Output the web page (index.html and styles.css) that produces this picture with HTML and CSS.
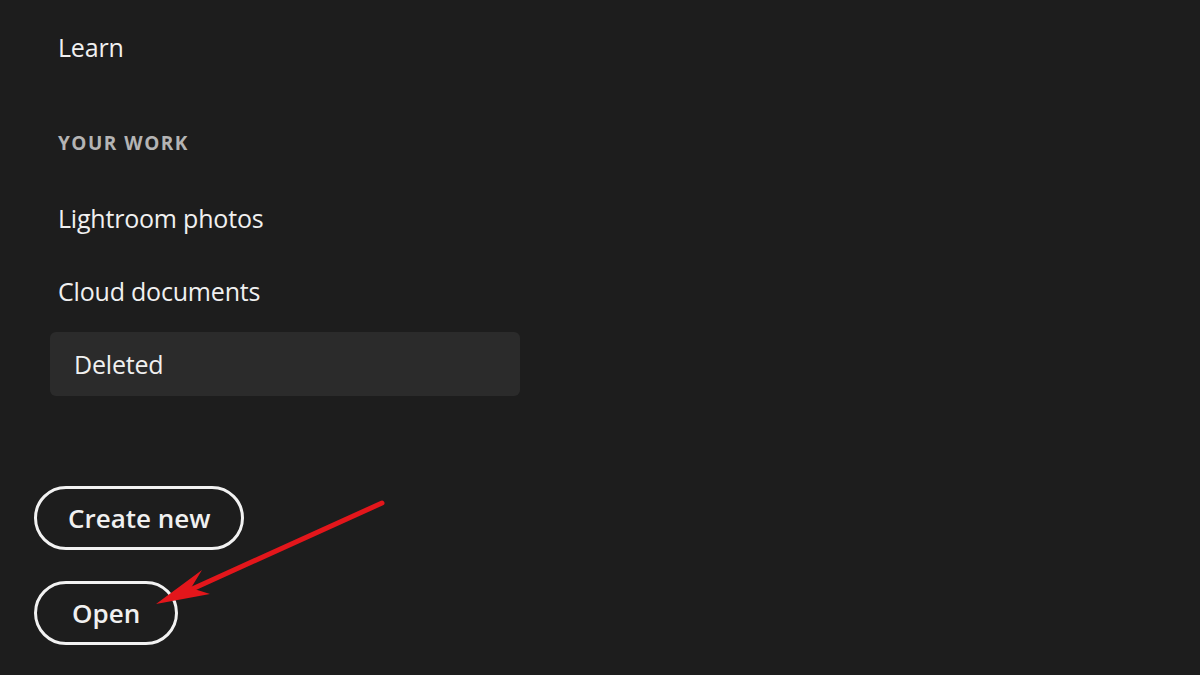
FILE: index.html
```html
<!DOCTYPE html>
<html lang="en">
<head>
    <meta charset="UTF-8">
    <meta name="viewport" content="width=device-width, initial-scale=1.0">
    <title>Your work</title>
    <link rel="stylesheet" href="styles.css">
</head>
<body>
    <aside class="sidebar">
        <nav class="nav">
            <a href="#" class="nav-item">Learn</a>
        </nav>

        <div class="section-title">YOUR WORK</div>

        <nav class="nav">
            <a href="#" class="nav-item">Lightroom photos</a>
            <a href="#" class="nav-item">Cloud documents</a>
            <a href="#" class="nav-item selected">Deleted</a>
        </nav>

        <div class="actions">
            <button class="pill-btn">Create new</button>
            <button class="pill-btn">Open</button>
        </div>
    </aside>

    <!-- annotation arrow pointing at Open -->
    <svg class="arrow" width="1200" height="675" viewBox="0 0 1200 675">
        <line x1="382" y1="503" x2="190" y2="590" stroke="#e3161b" stroke-width="5" stroke-linecap="round"/>
        <polygon points="156,604 202,570 191,588 210,594" fill="#e3161b"/>
    </svg>
</body>
</html>
```

FILE: styles.css
```css
body {
    font-family: 'Open Sans', 'Noto Sans', sans-serif;
    background-color: #1d1d1d;
    color: #f0f0f0;
    margin: 0;
    width: 1200px;
    height: 675px;
    overflow: hidden;
    position: relative;
}
.sidebar {
    width: 470px;
    padding: 15px 0 0 50px;
}
.nav {
    display: flex;
    flex-direction: column;
    gap: 9px;
}
.nav-item {
    display: flex;
    align-items: center;
    height: 64px;
    padding-left: 8px;
    border-radius: 6px;
    color: #f0f0f0;
    text-decoration: none;
    font-size: 25px;
    letter-spacing: -0.2px;
}
.nav-item.selected {
    background-color: #2b2b2b;
    padding-left: 24px;
}
.section-title {
    margin: 44px 0 23px 8px;
    height: 40px;
    line-height: 40px;
    font-size: 19px;
    font-weight: 700;
    letter-spacing: 1.5px;
    color: #b4b4b4;
}
.actions {
    display: flex;
    flex-direction: column;
    align-items: flex-start;
    gap: 31px;
    margin: 90px 0 0 -16px;
}
.pill-btn {
    height: 64px;
    padding: 0 31px;
    border: 3px solid #f2f2f2;
    border-radius: 32px;
    background-color: transparent;
    color: #f0f0f0;
    font-family: inherit;
    font-size: 26px;
    font-weight: 600;
    cursor: pointer;
}
.pill-btn:last-child {
    padding: 0 35px;
}
.arrow {
    position: absolute;
    left: 0;
    top: 0;
    pointer-events: none;
}
```
